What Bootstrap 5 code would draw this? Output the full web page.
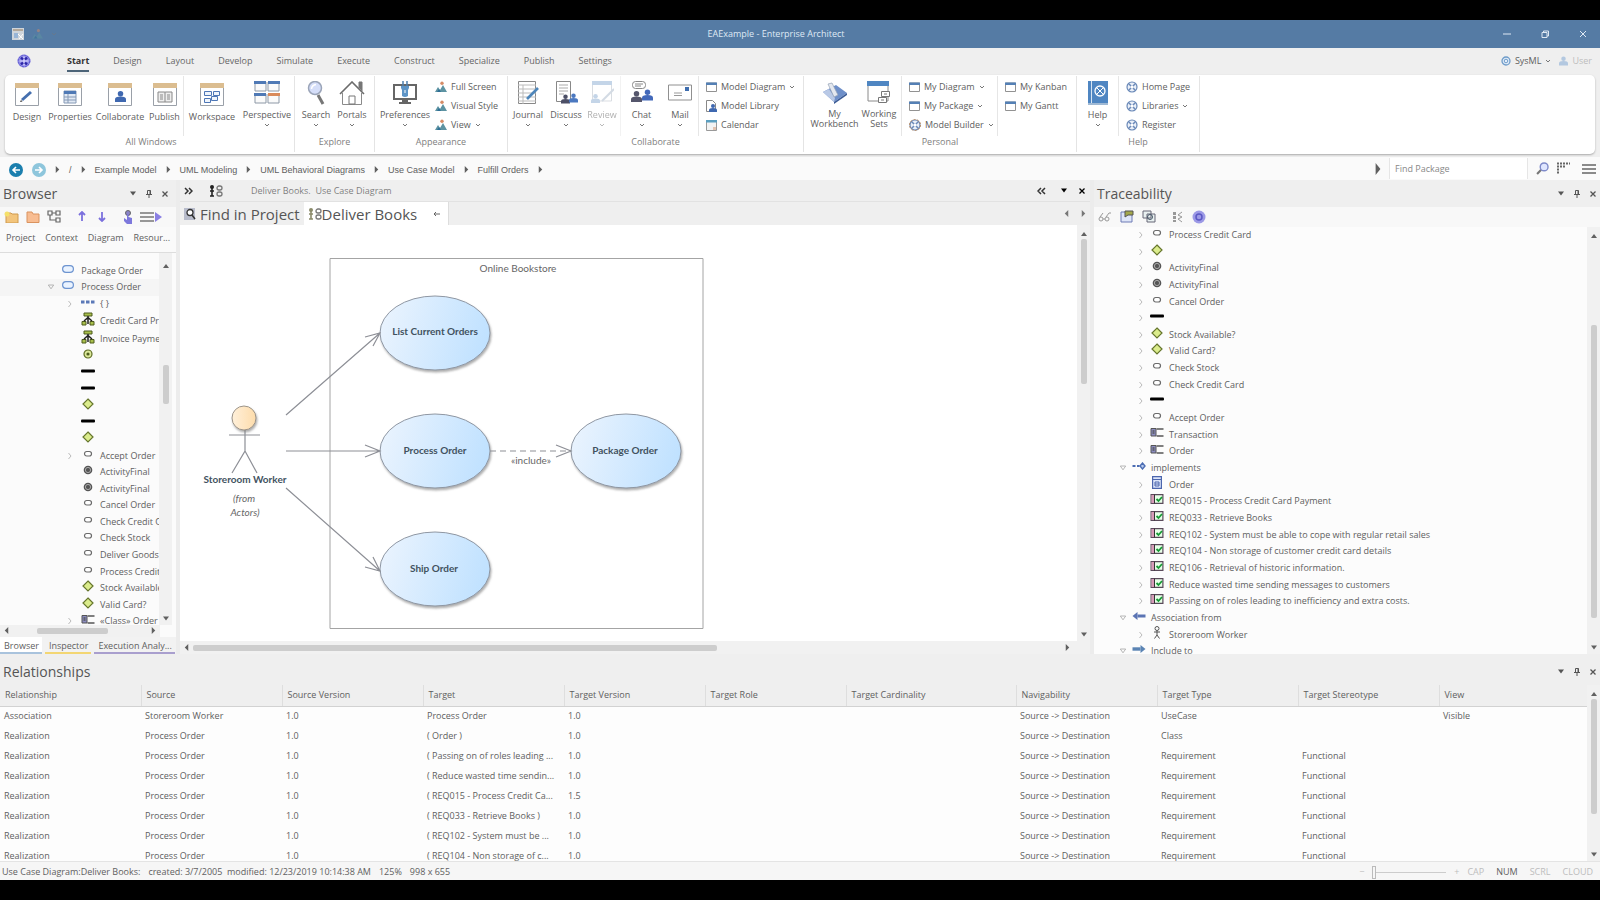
<!DOCTYPE html>
<html lang="en">
<head>
<meta charset="utf-8">
<meta name="viewport" content="width=device-width, initial-scale=1">
<title>EAExample - Enterprise Architect</title>
<link href="https://cdn.jsdelivr.net/npm/bootstrap@5.3.0/dist/css/bootstrap.min.css" rel="stylesheet">
<style>
  body{font-family:"Open Sans","Noto Sans",sans-serif;font-size:9px;line-height:12px;color:#606060;background:#000}
  .shell{height:100vh;padding:20px 0;min-height:700px}
  .shell button,.shell input{font-family:inherit;font-size:inherit;line-height:inherit;color:inherit}
  .plain{background:none;border:0;padding:0;border-radius:0}
  a{color:inherit;text-decoration:none}
  svg{display:block;flex:none}
  .titlebar{height:28px;background:#557ba4;color:#dfe9f4}
  .apptitle{padding-right:56px}
  .win-btns{gap:20px;padding-right:12px}
  .menubar{height:28px;background:#efefef;padding:0 8px 0 13px}
  .menubar .nav{gap:24px;margin-left:32px}
  .menubar .nav-link{padding:7px 0 3px;color:#666;border-bottom:2px solid transparent}
  .menubar .nav-link.active{font-weight:700;color:#333;border-color:#4d6478}
  .ribbon-wrap{background:#efefef;padding:0 5px 3px}
  .ribbon{height:79px;background:#fff;border-radius:5px;box-shadow:0 1px 2px #aaa;padding:1px 0 2px 3px}
  .rgroup{border-right:1px solid #e4e4e4}
  .rgroup footer{height:16px;color:#808080;text-align:center}
  .rcells{display:grid;flex:1}
  .rcells>.cut{border-right:1px solid #e6e6e6}
  .c-win{grid-template-columns:38px 48px 52px 38px 56px 54px}
  .c-exp{grid-template-columns:42px 30px 7px}
  .c-app{grid-template-columns:60px 72px}
  .c-col{grid-template-columns:40px 36px 37px 41px 37px 104px}
  .c-per{grid-template-columns:53px 45px 96px 78px}
  .c-hlp{grid-template-columns:42px 80px}
  .bigbtn{display:flex;flex-direction:column;align-items:center;white-space:nowrap;padding-top:5px!important}
  .bigbtn svg:first-child{margin-bottom:4px}
  .bigbtn svg:last-child{margin-top:2px}
  .bigbtn .two{line-height:10px}
  .smalls{display:flex;flex-direction:column;gap:7px;padding:5px 0 0 7px}
  .smalls button{display:flex;align-items:center;gap:4px;white-space:nowrap;height:12px}
  .pathbar{height:23px;background:#fafafa}
  .pathbar .crumbs{gap:9px;padding-left:9px;padding-top:2px;font-family:"Liberation Sans",Arial,sans-serif}
  .findbox{width:139px;border:0;border-left:1px solid #e6e6e6;border-right:1px solid #e6e6e6;background:#fff;padding:0 5px;height:21px;outline:0}
  .findbox::placeholder{color:#888;opacity:1}
  .work{background:#ececec;min-height:0}
  .side-l{width:176px;background:#fbfbfb}
  .side-r{width:506px;background:#fcfcfc}
  .panel-title{height:27px;background:#efefef;font-size:14px;line-height:27px;color:#555;padding:0 3px}
  .toolrow{height:20px;background:#f8f8f8}
  .toolrow-l{gap:7px}
  .toolrow-l .s1{margin-left:10px}.toolrow-l .s2{margin-left:5px}
  .ptabs{height:26px;padding:5px 6px 0;border-bottom:1px solid #ddd;background:#fafafa}
  .tree{list-style:none;margin:0;padding:0;display:grid;grid-auto-rows:1fr}
  .tree li{display:flex;align-items:center;white-space:nowrap;gap:5px}
  .tree li>svg:nth-child(2){margin-bottom:4px}
  .tree-l{height:367px;margin-top:10px}
  .tree-l .d1{padding-left:45px}
  .tree-l .d2{padding-left:64px}
  .tree-r{height:433px}
  .tree-r .d1{padding-left:25px}
  .tree-r .d2{padding-left:43px}
  .tree-l .picked{background:#f5f5f5}
  .vbar{width:13px;background:#f1f1f1;padding:4px 0}
  .hbar{height:13px;background:#f1f1f1;padding:0 4px}
  .thumb{background:#cdcdcd;border-radius:2px}
  .vbar .thumb{width:6px}.hbar .thumb{height:6px}
  .dock{height:17px;background:#f2f2f2;gap:3px}
  .dock button{border-bottom:2px solid;padding:2px 3px 0 4px;white-space:nowrap}
  .k-blue{border-color:#a9c3dd!important;background:#fff}.k-yel{border-color:#f3d673!important}.k-vio{border-color:#a99fce!important}
  .docline{height:22px;background:#efefef;border-bottom:1px solid #e2e2e2}
  .docline .tools{gap:10px}
  .doctabs{height:23px;background:#efefef;font-size:15px;line-height:22px;color:#555}
  .doctabs .live{background:#fff;border-right:1px solid #ddd}
  .canvas text{fill:#666;font-family:Lato,"Open Sans",sans-serif;font-size:10px;text-anchor:middle}
  .canvas .strong{font-weight:700;fill:#42525f}
  .rel{background:#efefef;padding-top:4px}
  .relrows{height:176px;overflow:hidden;background:#fdfdfd}
  .reltable{table-layout:fixed;width:100%;border-collapse:collapse}
  .reltable th{font-weight:400;height:21px;background:#efefef;padding:0 5px;border-left:1px solid #dedede;border-bottom:1px solid #d2d2d2}
  .reltable th:first-child{border-left:0}
  .reltable td{height:20px;padding:0 4px;white-space:nowrap;overflow:hidden;text-overflow:ellipsis}
  .w-a{width:141px}.w-b{width:170px}
  .status{height:19px;background:#f6f6f6;border-top:1px solid #e4e4e4;padding:2px 7px 0 2px}
  .dim{color:#bdbdbd!important}
  .zoomer{-webkit-appearance:none;appearance:none;width:74px;height:14px;background:linear-gradient(#ccc,#ccc) center/100% 1px no-repeat}
  .zoomer::-webkit-slider-thumb{-webkit-appearance:none;width:4px;height:13px;border:1px solid #bbb;background:#f6f6f6}
</style>
</head>
<body>
<svg width="0" height="0" class="position-absolute" aria-hidden="true">
  <defs>
    <linearGradient id="blue" x1="0" y1=".4" x2="1" y2=".6"><stop offset="0" stop-color="#e9f3fe"/><stop offset="1" stop-color="#bfe1ff"/></linearGradient>
    <linearGradient id="skin" x1="0" x2="1"><stop offset="0" stop-color="#fff0da"/><stop offset="1" stop-color="#fddcab"/></linearGradient>
    <filter id="drop" x="-10%" y="-10%" width="120%" height="130%"><feDropShadow dx="1" dy="2" stdDeviation="1" flood-color="#777" flood-opacity=".6"/></filter>
  </defs>
  <symbol id="chev" viewBox="0 0 6 4"><path d="M1 1l2 2 2-2" fill="none" stroke="#777"/></symbol>
  <symbol id="dn" viewBox="0 0 8 5"><path d="M1 .5h6L4 4.5z" fill="currentColor"/></symbol>
  <symbol id="up" viewBox="0 0 8 5"><path d="M1 4.500h6L4 .5z" fill="currentColor"/></symbol>
  <symbol id="rt" viewBox="0 0 5 8"><path d="M.5 0v8l4-4z" fill="currentColor"/></symbol>
  <symbol id="lf" viewBox="0 0 5 8"><path d="M4.500 0v8l-4-4z" fill="currentColor"/></symbol>
  <symbol id="pin" viewBox="0 0 8 8"><path d="M2.500.5h3v4h-3zM1 4.500h6M4 4.500V8M5 .5v4" fill="none" stroke="currentColor"/></symbol>
  <symbol id="x" viewBox="0 0 8 8"><path d="M1.500 1.500l5 5m0-5l-5 5" stroke="currentColor" stroke-width="1.300"/></symbol>
  <symbol id="win" viewBox="0 0 24 24"><path d="M.5.5h23v22H.5z" fill="#fff" stroke="#9aa0a8"/><path d="M0 0h24v5H0z" fill="#dbbd90"/></symbol>
  <symbol id="ea" viewBox="0 0 14 14"><circle cx="7" cy="7" r="6.500" fill="#8e8ae6"/><circle cx="7" cy="7" r="5.800" fill="none" stroke="#5e58cf" stroke-dasharray="2 1"/><path d="M7 2.500v9M2.500 7h9" stroke="#dcdaff" stroke-width="1.200"/><path d="M4 3.500l2 2M10 3.500l-2 2M4 10.500l2-2M10 10.500l-2-2" stroke="#2c26a8" stroke-width="2.400"/></symbol>
  <symbol id="ball" viewBox="0 0 12 12"><circle cx="6" cy="6" r="5" fill="#e9eff8" stroke="#6a89b8" stroke-width="1.200"/><path d="M3 3l6 6m0-6L3 9" stroke="#6a89b8" stroke-width="1.500"/><circle cx="6" cy="6" r="1.500" fill="#fff"/></symbol>
  <symbol id="scene" viewBox="0 0 12 12"><path d="M0 11l3-5 2 3 3-5 4 7z" fill="#5d93a2"/><path d="M2 11l2-3 2 3z" fill="#2e6f96"/><circle cx="7" cy="2.300" r="1.700" fill="#d58b66"/></symbol>
  <symbol id="mini" viewBox="0 0 11 10"><path d="M.5 1h10v8.500H.5z" fill="#fff" stroke="#929292"/><path d="M0 .5h11V3H0z" fill="#5480b5"/></symbol>
  <symbol id="folk" viewBox="0 0 12 12"><circle cx="6" cy="3" r="3" fill="currentColor"/><path d="M0 12V9q0-3 6-3t6 3v3z" fill="currentColor"/></symbol>
  <symbol id="uc" viewBox="0 0 12 8"><rect x=".6" y=".6" width="10.800" height="6.800" rx="3.400" fill="#eaf3ff" stroke="#6d94d0" stroke-width="1.200"/></symbol>
  <symbol id="act" viewBox="0 0 12 8"><rect x="2.500" y="1.500" width="7" height="4.500" rx="2.200" fill="#fff" stroke="#6b6b6b" stroke-width="1.200"/></symbol>
  <symbol id="fin" viewBox="0 0 12 10"><circle cx="6" cy="5" r="4.300" fill="#555"/><circle cx="6" cy="5" r="2.600" fill="none" stroke="#aaa"/></symbol>
  <symbol id="ini" viewBox="0 0 12 10"><circle cx="6" cy="5" r="4" fill="#dbe89a" stroke="#5c6b22" stroke-width="1.200"/><circle cx="6" cy="5" r="1.600" fill="#4e5c1c"/></symbol>
  <symbol id="dia" viewBox="0 0 12 12"><path d="M6 1l5 5-5 5-5-5z" fill="#dbec8c" stroke="#66762d" stroke-width="1.200"/></symbol>
  <symbol id="bar" viewBox="0 0 14 4"><rect width="14" height="3" y=".5" rx="1" fill="#000"/></symbol>
  <symbol id="dots" viewBox="0 0 14 4"><path d="M0 .5h3.500v3H0zM5 .5h3.500v3H5zM10 .5h3.500v3H10z" fill="#5b79b8"/></symbol>
  <symbol id="org" viewBox="0 0 12 14"><path d="M2 1h8v3H2zM0 9.500h4v3.500H0zM8 9.500h4v3.500H8z" fill="#a9c04c" stroke="#4d5b1c"/><path d="M6 4v8M2 9l4-3.500L10 9" fill="none" stroke="#222" stroke-width="1.500"/></symbol>
  <symbol id="cls" viewBox="0 0 13 9"><path d="M.5.5h5v7.500h-5z" fill="#8b8cc0" stroke="#555"/><path d="M6 1h7M6 8h7M2 3h2M2 5h2" stroke="#555" stroke-width="1.500"/></symbol>
  <symbol id="req" viewBox="0 0 13 10"><path d="M.6.6h11.800v8.800H.6z" fill="#e9ffe9" stroke="#5a4a5a" stroke-width="1.200"/><path d="M1 1h2.500v8H1z" fill="#d79ab8"/><path d="M4 .5v9" stroke="#333"/><path d="M6 5l2 2 3.500-4" fill="none" stroke="#179a35" stroke-width="1.800"/></symbol>
  <symbol id="doc" viewBox="0 0 10 13"><path d="M.6.6h8.800v11.800H.6z" fill="#dce5fa" stroke="#4c66ad" stroke-width="1.200"/><path d="M1 3.500h8M3 6h4v4H3zM3 8h4" fill="none" stroke="#4c66ad"/></symbol>
  <symbol id="imp" viewBox="0 0 13 8"><path d="M0 4h3M4.500 4h2.500" stroke="#4c6db3" stroke-width="2"/><path d="M7.500 4L10 1l2.500 3L10 7z" fill="#b9cbee" stroke="#4c6db3" stroke-width="1.400"/></symbol>
  <symbol id="afrom" viewBox="0 0 13 8"><path d="M13 4H5" stroke="#5b74b4" stroke-width="3"/><path d="M0 4l5-4v8z" fill="#5b74b4"/></symbol>
  <symbol id="ato" viewBox="0 0 13 8"><path d="M0 4h8" stroke="#5b84b4" stroke-width="3.400"/><path d="M13 4L8 0v8z" fill="#5b84b4"/></symbol>
  <symbol id="man" viewBox="0 0 8 13"><circle cx="4" cy="2.500" r="2" fill="none" stroke="#555"/><path d="M4 4.500V9M1 6h6M4 9l-2.500 3.500M4 9l2.500 3.500" fill="none" stroke="#555"/></symbol>
  <symbol id="shut" viewBox="0 0 4 8"><path d="M.5 1L3 4 .5 7" fill="none" stroke="#bbb"/></symbol>
  <symbol id="open" viewBox="0 0 7 6"><path d="M.8 1h5.400L3.500 4.800z" fill="none" stroke="#a5a5a5" stroke-width=".8"/></symbol>
  <symbol id="ucd" viewBox="0 0 14 12"><circle cx="3" cy="2" r="2" fill="currentColor"/><path d="M3 3v8M1 11h4M1 6h4" stroke="currentColor" stroke-width="1.600"/><rect x="8" y="1" width="5" height="4" rx="2" fill="none" stroke="#777" stroke-width="1.300"/><rect x="8" y="7" width="5" height="4" rx="2" fill="none" stroke="#777" stroke-width="1.300"/></symbol>
  <symbol id="lens" viewBox="0 0 12 12"><path d="M1 11l4-4" stroke="#777" stroke-width="2"/><circle cx="7.500" cy="4.500" r="3.600" fill="#dfe6ff" stroke="#7e8ac9" stroke-width="1.300"/></symbol>
</svg>

<div class="shell d-flex flex-column">
  <header class="titlebar d-flex align-items-center">
    <div class="d-flex align-items-center gap-2 ps-2 col">
      <button class="plain ms-1" aria-label="Save"><svg width="12" height="12" viewBox="0 0 12 12"><path d="M0 0h12v12H0z" fill="#cfd5db"/><path d="M1 1h10v2H1z" fill="#b3a89a"/><path d="M2 5h4v5H2z" fill="#98b5d6"/><path d="M6 6l5 5M11 6l-4 5" stroke="#fff"/></svg></button>
      <button class="plain opacity-50" aria-label="Visual style"><svg width="11" height="12"><use href="#scene"/></svg></button>
      <button class="plain" aria-label="More"><svg width="6" height="4" opacity=".5"><use href="#chev"/></svg></button>
    </div>
    <div class="apptitle">EAExample - Enterprise Architect</div>
    <div class="col d-flex justify-content-end">
      <div class="win-btns d-flex justify-content-end">
        <button class="plain mx-1" aria-label="Minimize"><svg width="10" height="10" viewBox="0 0 10 10"><path d="M1 5h8" stroke="#dfe9f4"/></svg></button>
        <button class="plain mx-1" aria-label="Restore"><svg width="10" height="10" viewBox="0 0 10 10"><path d="M2 3.500h5v5H2zM3.500 3.500V2h5v5H7" fill="none" stroke="#dfe9f4"/></svg></button>
        <button class="plain ms-1" aria-label="Close"><svg width="10" height="10" viewBox="0 0 10 10"><path d="M2 2l6 6m0-6L2 8" stroke="#dfe9f4"/></svg></button>
      </div>
    </div>
  </header>

  <div class="menubar d-flex align-items-center">
    <button class="plain d-flex align-items-center ms-1" aria-label="Application menu"><svg width="14" height="14"><use href="#ea"/></svg></button>
    <nav class="nav flex-nowrap align-self-start ps-1">
      <a class="nav-link active" href="#">Start</a><a class="nav-link" href="#">Design</a><a class="nav-link" href="#">Layout</a><a class="nav-link" href="#">Develop</a><a class="nav-link" href="#">Simulate</a><a class="nav-link" href="#">Execute</a><a class="nav-link" href="#">Construct</a><a class="nav-link" href="#">Specialize</a><a class="nav-link" href="#">Publish</a><a class="nav-link" href="#">Settings</a>
    </nav>
    <button class="plain ms-auto d-flex align-items-center gap-1"><svg width="10" height="10" viewBox="0 0 10 10"><circle cx="5" cy="5" r="4" fill="#e4eefa" stroke="#6f9cc9" stroke-width="1.300"/><circle cx="5" cy="5" r="1.800" fill="none" stroke="#6f9cc9"/></svg>SysML <svg width="6" height="4"><use href="#chev"/></svg></button>
    <button class="plain ms-2 d-flex align-items-center gap-1 dim"><svg width="9" height="10" color="#b3c8e0"><use href="#folk"/></svg>User</button>
  </div>

  <div class="ribbon-wrap">
    <div class="ribbon d-flex">
      <section class="rgroup d-flex flex-column">
        <div class="rcells c-win">
          <button class="plain bigbtn"><svg width="24" height="24" viewBox="0 0 24 24"><use href="#win"/><path d="M7 17l9-8" stroke="#456fae" stroke-width="3"/><path d="M5 19l2.500-.5L6 17z" fill="#333"/></svg>Design</button>
          <button class="plain bigbtn"><svg width="24" height="24" viewBox="0 0 24 24"><use href="#win"/><path d="M6 8h12v12H6z" fill="#e1e9f4" stroke="#8599b5"/><path d="M6 8h12v3H6z" fill="#4f79b5"/><path d="M6 14h12M6 17h12M10 11v9" stroke="#8599b5"/></svg>Properties</button>
          <button class="plain bigbtn"><svg width="24" height="24" viewBox="0 0 24 24"><use href="#win"/><svg x="7" y="8" width="11" height="11" color="#3f68b0"><use href="#folk"/></svg></svg>Collaborate</button>
          <button class="plain bigbtn cut"><svg width="24" height="24" viewBox="0 0 24 24"><use href="#win"/><path d="M5 9h6.500q.5.500 1 0H19v10H5zM12 9v10" fill="#eee" stroke="#888"/><path d="M7 12h3M7 14h3M7 16h3M14 12h3M14 14h3M14 16h3" stroke="#888"/></svg>Publish</button>
          <button class="plain bigbtn"><svg width="24" height="24" viewBox="0 0 24 24"><use href="#win"/><path d="M4.500 8.500h7v4h-7zM13.500 8.500h6v4h-6zM4.500 15.500h6v4h-6zM11.500 13.500h6v4h-6z" fill="#eef4fc" stroke="#4d76b6"/></svg>Workspace</button>
          <button class="plain bigbtn"><svg width="26" height="24" viewBox="0 0 26 24"><path d="M1 1h11v9H1zM14 1h11v9H14zM1 13h11v9H1zM14 13h11v9H14z" fill="#fafafa" stroke="#8d98a6"/><path d="M0 0h12v3H0zM14 0h12v3H14zM0 12h12v3H0z" fill="#4f79b5"/><path d="M14 12h12v3H14z" fill="#d98a5a"/></svg>Perspective<svg width="6" height="4"><use href="#chev"/></svg></button>
        </div><footer>All Windows</footer>
      </section>
      <section class="rgroup d-flex flex-column">
        <div class="rcells c-exp">
          <button class="plain bigbtn"><svg width="20" height="24" viewBox="0 0 20 24"><path d="M12 14l5 9" stroke="#777" stroke-width="3"/><circle cx="9" cy="7" r="6.500" fill="#d5def9" stroke="#9aa4b8" stroke-width="1.500"/><path d="M5.500 8Q6 4 10 3.500" fill="none" stroke="#fff" stroke-width="1.500"/></svg>Search<svg width="6" height="4"><use href="#chev"/></svg></button>
          <button class="plain bigbtn"><svg width="26" height="24" viewBox="0 0 26 24"><path d="M3.500 12v11.500h19V12" fill="#fff" stroke="#8a8a8a"/><path d="M1 13L13 1l12 12" fill="none" stroke="#6b6b6b" stroke-width="1.600"/><path d="M20 7V1h3v9" fill="#777" stroke="#777"/><path d="M10 15h6v8h-6z" fill="#fff" stroke="#777"/></svg>Portals<svg width="6" height="4"><use href="#chev"/></svg></button>
        </div><footer>Explore</footer>
      </section>
      <section class="rgroup d-flex flex-column">
        <div class="rcells c-app">
          <button class="plain bigbtn"><svg width="26" height="24" viewBox="0 0 26 24"><path d="M2 4h22v14H2z" fill="#fff" stroke="#666" stroke-width="2"/><path d="M10 18h6v3h3v2H7v-2h3z" fill="#666"/><path d="M11 0v5M15 0v5" stroke="#4e7fae" stroke-width="1.500"/><path d="M9 5h8v2l-1 2v6q-3 2-6 0l0-6-1-2z" fill="#5d94c6"/><path d="M13 9v3" stroke="#fff"/></svg>Preferences<svg width="6" height="4"><use href="#chev"/></svg></button>
          <div class="smalls ps-0">
            <button class="plain"><svg width="12" height="12"><use href="#scene"/></svg>Full Screen</button>
            <button class="plain"><svg width="12" height="12"><use href="#scene"/></svg>Visual Style</button>
            <button class="plain"><svg width="12" height="12"><use href="#scene"/></svg>View <svg width="6" height="4"><use href="#chev"/></svg></button>
          </div>
        </div><footer>Appearance</footer>
      </section>
      <section class="rgroup d-flex flex-column">
        <div class="rcells c-col">
          <button class="plain bigbtn"><svg width="24" height="24" viewBox="0 0 24 24"><path d="M2.500.5h17v22h-17z" fill="#fff" stroke="#888"/><path d="M2 4h18M2 8h18M2 12h18M2 16h18M2 20h18M7 4v19" stroke="#bbb"/><path d="M11 18L22 7" stroke="#4e86ba" stroke-width="2.600"/></svg>Journal<svg width="6" height="4"><use href="#chev"/></svg></button>
          <button class="plain bigbtn"><svg width="24" height="24" viewBox="0 0 24 24"><path d="M2.500.5h14v20h-14z" fill="#fff" stroke="#888"/><path d="M5 4h9M5 7h9M5 10h9M5 13h5" stroke="#aaa"/><svg x="7" y="12" width="9" height="12" color="#4c4f66"><use href="#folk"/></svg><svg x="15" y="11" width="9" height="12" color="#4b78c0"><use href="#folk"/></svg></svg>Discuss<svg width="6" height="4"><use href="#chev"/></svg></button>
          <button class="plain bigbtn cut opacity-50"><svg width="24" height="24" viewBox="0 0 24 24"><path d="M2.500 1h19v19h-19z" fill="#fff" stroke="#b5bcc6"/><path d="M2 0h20v4H2z" fill="#8bacd2"/><path d="M12 20l12-12" stroke="#a9b8ca" stroke-width="2"/><svg x="1" y="12" width="9" height="11" color="#8bacd2"><use href="#folk"/></svg></svg>Review<svg width="6" height="4"><use href="#chev"/></svg></button>
          <button class="plain bigbtn"><svg width="24" height="24" viewBox="0 0 24 24"><rect x="2.500" y=".5" width="13" height="7" rx="3" fill="#fff" stroke="#888"/><path d="M5 3h8M5 5h6" stroke="#888"/><svg x="1" y="8" width="11" height="15" color="#55566c"><use href="#folk"/></svg><svg x="12" y="6" width="11" height="16" color="#4369ba"><use href="#folk"/></svg></svg>Chat<svg width="6" height="4"><use href="#chev"/></svg></button>
          <button class="plain bigbtn cut"><svg width="24" height="24" viewBox="0 0 24 24"><path d="M.5 4h23v15H.5z" fill="#fff" stroke="#909090"/><path d="M17 6h4v4h-4z" fill="#3f6dae"/><path d="M6 12h8M6 14.500h8" stroke="#999"/></svg>Mail<svg width="6" height="4"><use href="#chev"/></svg></button>
          <div class="smalls">
            <button class="plain"><svg width="11" height="10"><use href="#mini"/></svg>Model Diagram <svg width="6" height="4"><use href="#chev"/></svg></button>
            <button class="plain"><svg width="11" height="12" viewBox="0 0 11 12"><path d="M.5.5h6l3 3v8h-9z" fill="#fff" stroke="#888"/><svg x="3" y="4" width="8" height="8" color="#3f68b0"><use href="#folk"/></svg></svg>Model Library</button>
            <button class="plain"><svg width="11" height="11" viewBox="0 0 11 11"><path d="M.5.5h10v10H.5z" fill="#f3f3f3" stroke="#999"/><path d="M0 0h11v2.500H0z" fill="#5b9fc0"/><path d="M7 7h3v3H7z" fill="#e3c3b0"/></svg>Calendar</button>
          </div>
        </div><footer>Collaborate</footer>
      </section>
      <section class="rgroup d-flex flex-column">
        <div class="rcells c-per">
          <button class="plain bigbtn ps-2"><svg width="26" height="24" viewBox="0 0 26 24"><path d="M1 11L14 4l11 8-13 9z" fill="#6e8fc9"/><path d="M1 11l6-3 6 9-1 4z" fill="#b9c9e6"/><path d="M6 3l4-1 6 12-4 2z" fill="#e4e8ef" stroke="#93a0b5" stroke-width=".7"/><path d="M12 21l13-9v2l-13 9z" fill="#3c5c96"/></svg><span class="two">My<br>Workbench</span></button>
          <button class="plain bigbtn cut"><svg width="24" height="24" viewBox="0 0 24 24"><path d="M1 1h20v19H1z" fill="#fff" stroke="#8a8a8a"/><path d="M0 0h22v5H0z" fill="#4f86c2"/><path d="M14.500 10.500h8v5h-8zM11.500 16.500h8v5h-8z" fill="#fff" stroke="#777"/><path d="M17 13h3M14 19h3" stroke="#777"/></svg><span class="two">Working<br>Sets</span></button>
          <div class="smalls cut">
            <button class="plain"><svg width="11" height="10"><use href="#mini"/></svg>My Diagram <svg width="6" height="4"><use href="#chev"/></svg></button>
            <button class="plain"><svg width="11" height="10"><use href="#mini"/></svg>My Package <svg width="6" height="4"><use href="#chev"/></svg></button>
            <button class="plain"><svg width="12" height="12" viewBox="0 0 12 12"><use href="#ball"/><circle cx="6" cy="6" r="5.500" fill="none" stroke="#b98a60" stroke-dasharray="2 1.400"/></svg>Model Builder <svg width="6" height="4"><use href="#chev"/></svg></button>
          </div>
          <div class="smalls">
            <button class="plain"><svg width="11" height="10"><use href="#mini"/></svg>My Kanban</button>
            <button class="plain"><svg width="11" height="10"><use href="#mini"/></svg>My Gantt</button>
          </div>
        </div><footer>Personal</footer>
      </section>
      <section class="rgroup d-flex flex-column">
        <div class="rcells c-hlp">
          <button class="plain bigbtn cut"><svg width="20" height="24" viewBox="0 0 20 24"><path d="M0 0h20v22H0z" fill="#4f86c2"/><path d="M3.500 0v22" stroke="#d7e5f3"/><path d="M0 23h20" stroke="#9fb9d4" stroke-width="2"/><circle cx="12" cy="10" r="5" fill="none" stroke="#fff" stroke-width="1.300"/><path d="M9 7l6 6m0-6l-6 6" stroke="#fff"/></svg>Help<svg width="6" height="4"><use href="#chev"/></svg></button>
          <div class="smalls">
            <button class="plain"><svg width="12" height="12"><use href="#ball"/></svg>Home Page</button>
            <button class="plain"><svg width="12" height="12"><use href="#ball"/></svg>Libraries <svg width="6" height="4"><use href="#chev"/></svg></button>
            <button class="plain"><svg width="12" height="12"><use href="#ball"/></svg>Register</button>
          </div>
        </div><footer>Help</footer>
      </section>
    </div>
  </div>

  <div class="pathbar d-flex align-items-center">
    <nav class="crumbs d-flex align-items-center">
      <button class="plain" aria-label="Back"><svg width="14" height="14" viewBox="0 0 14 14"><circle cx="7" cy="7" r="7" fill="#1b7fae"/><path d="M11 7H4M7 4L4 7l3 3" fill="none" stroke="#fff" stroke-width="1.600"/></svg></button>
      <button class="plain" aria-label="Forward"><svg width="14" height="14" viewBox="0 0 14 14"><circle cx="7" cy="7" r="7" fill="#8ec6dc"/><path d="M3 7h7M7 4l3 3-3 3" fill="none" stroke="#fff" stroke-width="1.600"/></svg></button>
      <svg width="5" height="7"><use href="#rt"/></svg><a href="#">/</a>
      <svg width="5" height="7"><use href="#rt"/></svg><a href="#">Example Model</a>
      <svg width="5" height="7"><use href="#rt"/></svg><a href="#">UML Modeling</a>
      <svg width="5" height="7"><use href="#rt"/></svg><a href="#">UML Behavioral Diagrams</a>
      <svg width="5" height="7"><use href="#rt"/></svg><a href="#">Use Case Model</a>
      <svg width="5" height="7"><use href="#rt"/></svg><a href="#">Fulfill Orders</a>
      <svg width="5" height="7"><use href="#rt"/></svg>
    </nav>
    <div class="ms-auto d-flex align-items-center gap-2 pe-1">
      <svg width="6" height="12" viewBox="0 0 5 8" preserveAspectRatio="none"><use href="#rt"/></svg>
      <input class="findbox" type="text" placeholder="Find Package" aria-label="Find Package">
      <button class="plain" aria-label="Search"><svg width="13" height="13"><use href="#lens"/></svg></button>
      <button class="plain" aria-label="Grid"><svg width="13" height="13" viewBox="0 0 13 13"><path d="M0 1.500h13M0 4.500h8M0 7.500h3M0 10.500h3" stroke="#666" stroke-width="2" stroke-dasharray="2 1"/></svg></button>
      <button class="plain ms-1" aria-label="Menu"><svg width="14" height="12" viewBox="0 0 14 12"><path d="M0 2h14M0 6h14M0 10h14" stroke="#666" stroke-width="1.600"/></svg></button>
    </div>
  </div>

  <main class="work d-flex flex-fill">
    <aside class="side-l d-flex flex-column flex-shrink-0">
      <div class="panel-title d-flex align-items-center">Browser<span class="ms-auto d-flex gap-2 align-items-center pe-1"><svg width="8" height="5"><use href="#dn"/></svg><svg width="8" height="8"><use href="#pin"/></svg><svg width="8" height="8"><use href="#x"/></svg></span></div>
      <div class="toolrow toolrow-l d-flex align-items-center ps-1">
        <button class="plain" aria-label="New model"><svg width="15" height="12" viewBox="0 0 15 12"><path d="M2 2h5l1 1h6v9H2z" fill="#f3c57c" stroke="#cf9a4e"/><circle cx="3" cy="3" r="2.500" fill="#f5e06a"/></svg></button>
        <button class="plain" aria-label="New package"><svg width="14" height="12" viewBox="0 0 14 12"><path d="M1 1h5l1 2h6v8.500H1z" fill="#f8bd92" stroke="#da935f"/></svg></button>
        <button class="plain" aria-label="New diagram"><svg width="14" height="13" viewBox="0 0 14 13"><path d="M1 1h4v4H1zM9 1h4v4H9zM9 8h4v4H9zM3 5v5h6M5 3h4" fill="none" stroke="#666" stroke-width="1.200"/></svg></button>
        <button class="plain s1" aria-label="Move up"><svg width="8" height="11" viewBox="0 0 8 11"><path d="M4 1v9M1 4l3-3 3 3" fill="none" stroke="#7b70dd" stroke-width="1.800"/></svg></button>
        <button class="plain s2" aria-label="Move down"><svg width="8" height="11" viewBox="0 0 8 11"><path d="M4 1v9M1 7l3 3 3-3" fill="none" stroke="#7b70dd" stroke-width="1.800"/></svg></button>
        <button class="plain s1" aria-label="Gesture"><svg width="10" height="14" viewBox="0 0 10 14"><circle cx="5" cy="3" r="2.500" fill="#8a83c8" stroke="#666"/><path d="M4 4v6L1 8v3l3 3h5V8L5.500 7V4z" fill="#7d78dc"/></svg></button>
        <button class="plain" aria-label="Options"><svg width="22" height="12" viewBox="0 0 22 12"><path d="M0 2h14M0 6h14M0 10h14" stroke="#777" stroke-width="1.500"/><path d="M15 1l7 5-7 5z" fill="#8b80e4"/></svg></button>
      </div>
      <nav class="ptabs d-flex justify-content-between"><a href="#">Project</a><a href="#">Context</a><a href="#">Diagram</a><a href="#">Resour...</a></nav>
      <div class="d-flex flex-fill overflow-hidden">
        <div class="flex-fill overflow-hidden h-100">
        <ul class="tree tree-l">
          <li class="d1"><svg width="12" height="6"></svg><svg width="12" height="8"><use href="#uc"/></svg>&nbsp;Package Order</li>
          <li class="d1 picked"><svg width="12" height="6"><use href="#open"/></svg><svg width="12" height="8"><use href="#uc"/></svg>&nbsp;Process Order</li>
          <li class="d2"><svg width="12" height="8"><use href="#shut"/></svg><svg width="14" height="4"><use href="#dots"/></svg>{ }</li>
          <li class="d2"><svg width="12" height="8"></svg><svg width="14" height="14"><use href="#org"/></svg>Credit Card Processing</li>
          <li class="d2"><svg width="12" height="8"></svg><svg width="14" height="14"><use href="#org"/></svg>Invoice Payment</li>
          <li class="d2"><svg width="12" height="8"></svg><svg width="14" height="10"><use href="#ini"/></svg></li>
          <li class="d2"><svg width="12" height="8"></svg><svg width="14" height="4"><use href="#bar"/></svg></li>
          <li class="d2"><svg width="12" height="8"></svg><svg width="14" height="4"><use href="#bar"/></svg></li>
          <li class="d2"><svg width="12" height="8"></svg><svg width="14" height="12"><use href="#dia"/></svg></li>
          <li class="d2"><svg width="12" height="8"></svg><svg width="14" height="4"><use href="#bar"/></svg></li>
          <li class="d2"><svg width="12" height="8"></svg><svg width="14" height="12"><use href="#dia"/></svg></li>
          <li class="d2"><svg width="12" height="8"><use href="#shut"/></svg><svg width="14" height="8"><use href="#act"/></svg>Accept Order</li>
          <li class="d2"><svg width="12" height="8"></svg><svg width="14" height="10"><use href="#fin"/></svg>ActivityFinal</li>
          <li class="d2"><svg width="12" height="8"></svg><svg width="14" height="10"><use href="#fin"/></svg>ActivityFinal</li>
          <li class="d2"><svg width="12" height="8"></svg><svg width="14" height="8"><use href="#act"/></svg>Cancel Order</li>
          <li class="d2"><svg width="12" height="8"></svg><svg width="14" height="8"><use href="#act"/></svg>Check Credit Card</li>
          <li class="d2"><svg width="12" height="8"></svg><svg width="14" height="8"><use href="#act"/></svg>Check Stock</li>
          <li class="d2"><svg width="12" height="8"></svg><svg width="14" height="8"><use href="#act"/></svg>Deliver Goods</li>
          <li class="d2"><svg width="12" height="8"></svg><svg width="14" height="8"><use href="#act"/></svg>Process Credit Card</li>
          <li class="d2"><svg width="12" height="8"></svg><svg width="14" height="12"><use href="#dia"/></svg>Stock Available?</li>
          <li class="d2"><svg width="12" height="8"></svg><svg width="14" height="12"><use href="#dia"/></svg>Valid Card?</li>
          <li class="d2"><svg width="12" height="8"><use href="#shut"/></svg><svg width="14" height="9"><use href="#cls"/></svg>«Class» Order</li>
        </ul>
        </div>
        <div class="vbar d-flex flex-column align-items-center flex-shrink-0 pt-2 me-1"><svg width="8" height="10"><use href="#up"/></svg><div class="flex-fill d-flex flex-column"><div style="flex:92"></div><div class="thumb" style="flex:38"></div><div style="flex:207"></div></div><svg width="8" height="5"><use href="#dn"/></svg></div>
      </div>
      <div class="hbar d-flex align-items-center me-3"><svg width="5" height="7"><use href="#lf"/></svg><div class="flex-fill d-flex"><div style="flex:28"></div><div class="thumb" style="flex:71"></div><div style="flex:43"></div></div><svg width="5" height="7"><use href="#rt"/></svg></div>
      <div class="dock d-flex"><button class="plain k-blue">Browser</button><button class="plain k-yel">Inspector</button><button class="plain k-vio">Execution Analy...</button></div>
    </aside>

    <section class="flex-fill d-flex flex-column ms-1 overflow-hidden">
      <div class="docline d-flex align-items-center ps-1 pe-1">
        <svg width="9" height="8" viewBox="0 0 9 8"><path d="M1 1l3 3-3 3M5 1l3 3-3 3" fill="none" stroke="#333" stroke-width="1.500"/></svg>
        <svg class="ms-3" width="14" height="12" color="#222"><use href="#ucd"/></svg>
        <span class="ms-4 ps-1 text-black-50">Deliver Books.&nbsp; Use Case Diagram</span>
        <span class="tools ms-auto d-flex align-items-center text-black"><svg class="me-1" width="9" height="8" viewBox="0 0 9 8"><path d="M4 1L1 4l3 3M8 1L5 4l3 3" fill="none" stroke="#333" stroke-width="1.500"/></svg><svg width="8" height="5"><use href="#dn"/></svg><svg width="8" height="8"><use href="#x"/></svg></span>
      </div>
      <div class="doctabs d-flex">
        <button class="plain d-flex align-items-center ps-1 pe-1"><svg class="me-1" width="12" height="12" viewBox="0 0 12 12"><path d="M0 0h11v12H0z" fill="#b8bccb"/><circle cx="6" cy="4.500" r="3" fill="#fff" stroke="#333" stroke-width="1.300"/><path d="M8 7l3 4" stroke="#333" stroke-width="1.600"/></svg>Find in Project</button>
        <button class="plain live d-flex align-items-center ps-1 pe-2"><svg width="14" height="12" color="#8b8b6a"><use href="#ucd"/></svg>Deliver Books<svg class="ms-3" width="7" height="6" viewBox="0 0 7 6"><path d="M7 3H1M3 1L1 3l2 2" fill="none" stroke="#666"/></svg></button>
        <span class="ms-auto d-flex align-items-center gap-2 pe-1 text-black-50"><svg width="5" height="7"><use href="#lf"/></svg><svg class="ms-1" width="5" height="7"><use href="#rt"/></svg></span>
      </div>
      <div class="flex-fill d-flex overflow-hidden">
        <div class="canvas flex-fill bg-white overflow-hidden">
          <svg width="560" height="415" viewBox="180 225 560 415" role="img" aria-label="Deliver Books use case diagram">
            <path d="M330 258.500h373v370H330z" fill="none" stroke="#a4a4a4"/>
            <text x="518" y="272" >Online Bookstore</text>
            <g fill="url(#blue)" stroke="#8f97a3" filter="url(#drop)"><ellipse cx="435" cy="333" rx="55" ry="37"/><ellipse cx="435" cy="451" rx="55" ry="37"/><ellipse cx="435" cy="569" rx="55" ry="37"/><ellipse cx="626" cy="451" rx="55" ry="37"/></g>
            <g fill="none" stroke="#8d8f96" stroke-width="1.200"><path d="M286 415l94-82M365 337l15-4-7 13M286 451h94M365 445l15 6-15 6M286 488l94 83M365 567l15 4-7-14M556 445l15 6-15 6"/><path d="M490 451h81" stroke-dasharray="6 4"/><path d="M245 430v21l-13 22M245 451l12 22M229 435h31"/></g>
            <circle cx="244" cy="418" r="12" fill="url(#skin)" stroke="#9c948a" filter="url(#drop)"/>
            <text class="strong" x="435" y="335">List Current Orders</text><text class="strong" x="435" y="454">Process Order</text><text class="strong" x="434" y="572">Ship Order</text><text class="strong" x="625" y="454">Package Order</text><text class="strong" x="245" y="483">Storeroom Worker</text>
            <text x="531" y="464">«include»</text>
            <text x="244" y="502" font-style="italic">(from</text><text x="245" y="516" font-style="italic">Actors)</text>
          </svg>
        </div>
        <div class="vbar d-flex flex-column align-items-center"><svg width="8" height="10"><use href="#up"/></svg><div class="flex-fill d-flex flex-column"><div class="thumb" style="flex:143"></div><div style="flex:246"></div></div><svg width="8" height="5"><use href="#dn"/></svg></div>
      </div>
      <div class="hbar d-flex align-items-center gap-1 pe-3"><svg width="5" height="7"><use href="#lf"/></svg><div class="flex-fill d-flex"><div class="thumb" style="flex:525"></div><div style="flex:344"></div></div><svg class="me-1" width="5" height="7"><use href="#rt"/></svg></div>
    </section>

    <aside class="side-r d-flex flex-column flex-shrink-0 ms-1">
      <div class="panel-title d-flex align-items-center">Traceability<span class="ms-auto d-flex gap-2 align-items-center"><svg width="8" height="5"><use href="#dn"/></svg><svg width="8" height="8"><use href="#pin"/></svg><svg width="8" height="8"><use href="#x"/></svg></span></div>
      <div class="toolrow d-flex align-items-center gap-2 ps-1">
        <button class="plain" aria-label="View"><svg width="14" height="10" viewBox="0 0 14 10"><circle cx="3" cy="7" r="2" fill="none" stroke="#999"/><circle cx="9" cy="7" r="2" fill="none" stroke="#999"/><path d="M2 5l3-4M8 5l3-4h2M5 7h2" fill="none" stroke="#999"/></svg></button>
        <button class="plain" aria-label="Properties"><svg width="14" height="13" viewBox="0 0 14 13"><path d="M1 2h11v10H1z" fill="#dfe6f8" stroke="#6c7bb5"/><path d="M5 1h8v4H8L5 7z" fill="#a3a84b" stroke="#555"/></svg></button>
        <button class="plain" aria-label="Diagram"><svg width="14" height="13" viewBox="0 0 14 13"><path d="M1 1h8v7H1zM5 4h8v8H5z" fill="#e8f0f0" stroke="#667"/><circle cx="8" cy="7" r="2.500" fill="none" stroke="#456"/></svg></button>
        <button class="plain ms-2" aria-label="Links"><svg width="12" height="12" viewBox="0 0 12 12"><path d="M1 1h3v3H1zM1 5h3v3H1zM1 9h3v2H1z" fill="#999"/><path d="M10 1L6 4l4 2-4 2 4 3" fill="none" stroke="#999"/></svg></button>
        <button class="plain" aria-label="Help"><svg width="14" height="14" viewBox="0 0 14 14"><circle cx="7" cy="7" r="6.500" fill="#9c99e6"/><circle cx="7" cy="7" r="3" fill="none" stroke="#5c58c4" stroke-width="1.500"/></svg></button>
      </div>
      <div class="d-flex flex-fill overflow-hidden">
        <div class="flex-fill overflow-hidden">
        <ul class="tree tree-r">
          <li class="d2"><svg width="8" height="8"><use href="#shut"/></svg><svg width="14" height="8"><use href="#act"/></svg>Process Credit Card</li>
          <li class="d2"><svg width="8" height="8"><use href="#shut"/></svg><svg width="14" height="12"><use href="#dia"/></svg></li>
          <li class="d2"><svg width="8" height="8"><use href="#shut"/></svg><svg width="14" height="10"><use href="#fin"/></svg>ActivityFinal</li>
          <li class="d2"><svg width="8" height="8"><use href="#shut"/></svg><svg width="14" height="10"><use href="#fin"/></svg>ActivityFinal</li>
          <li class="d2"><svg width="8" height="8"><use href="#shut"/></svg><svg width="14" height="8"><use href="#act"/></svg>Cancel Order</li>
          <li class="d2"><svg width="8" height="8"><use href="#shut"/></svg><svg width="14" height="4"><use href="#bar"/></svg></li>
          <li class="d2"><svg width="8" height="8"><use href="#shut"/></svg><svg width="14" height="12"><use href="#dia"/></svg>Stock Available?</li>
          <li class="d2"><svg width="8" height="8"><use href="#shut"/></svg><svg width="14" height="12"><use href="#dia"/></svg>Valid Card?</li>
          <li class="d2"><svg width="8" height="8"><use href="#shut"/></svg><svg width="14" height="8"><use href="#act"/></svg>Check Stock</li>
          <li class="d2"><svg width="8" height="8"><use href="#shut"/></svg><svg width="14" height="8"><use href="#act"/></svg>Check Credit Card</li>
          <li class="d2"><svg width="8" height="8"><use href="#shut"/></svg><svg width="14" height="4"><use href="#bar"/></svg></li>
          <li class="d2"><svg width="8" height="8"><use href="#shut"/></svg><svg width="14" height="8"><use href="#act"/></svg>Accept Order</li>
          <li class="d2"><svg width="8" height="8"><use href="#shut"/></svg><svg width="14" height="9"><use href="#cls"/></svg>Transaction</li>
          <li class="d2"><svg width="8" height="8"><use href="#shut"/></svg><svg width="14" height="9"><use href="#cls"/></svg>Order</li>
          <li class="d1"><svg width="8" height="6"><use href="#open"/></svg><svg width="14" height="8"><use href="#imp"/></svg>implements</li>
          <li class="d2"><svg width="8" height="8"><use href="#shut"/></svg><svg width="14" height="13"><use href="#doc"/></svg>Order</li>
          <li class="d2"><svg width="8" height="8"><use href="#shut"/></svg><svg width="14" height="10"><use href="#req"/></svg>REQ015 - Process Credit Card Payment</li>
          <li class="d2"><svg width="8" height="8"><use href="#shut"/></svg><svg width="14" height="10"><use href="#req"/></svg>REQ033 - Retrieve Books</li>
          <li class="d2"><svg width="8" height="8"><use href="#shut"/></svg><svg width="14" height="10"><use href="#req"/></svg>REQ102 - System must be able to cope with regular retail sales</li>
          <li class="d2"><svg width="8" height="8"><use href="#shut"/></svg><svg width="14" height="10"><use href="#req"/></svg>REQ104 - Non storage of customer credit card details</li>
          <li class="d2"><svg width="8" height="8"><use href="#shut"/></svg><svg width="14" height="10"><use href="#req"/></svg>REQ106 - Retrieval of historic information.</li>
          <li class="d2"><svg width="8" height="8"><use href="#shut"/></svg><svg width="14" height="10"><use href="#req"/></svg>Reduce wasted time sending messages to customers</li>
          <li class="d2"><svg width="8" height="8"><use href="#shut"/></svg><svg width="14" height="10"><use href="#req"/></svg>Passing on of roles leading to inefficiency and extra costs.</li>
          <li class="d1"><svg width="8" height="6"><use href="#open"/></svg><svg width="14" height="8"><use href="#afrom"/></svg>Association from</li>
          <li class="d2"><svg width="8" height="8"><use href="#shut"/></svg><svg width="14" height="13"><use href="#man"/></svg>Storeroom Worker</li>
          <li class="d1"><svg width="8" height="6"><use href="#open"/></svg><svg width="14" height="8"><use href="#ato"/></svg>Include to</li>
        </ul>
        </div>
        <div class="vbar d-flex flex-column align-items-center flex-shrink-0"><svg width="8" height="10"><use href="#up"/></svg><div class="flex-fill d-flex flex-column"><div style="flex:84"></div><div class="thumb" style="flex:294"></div><div style="flex:27"></div></div><svg width="8" height="5"><use href="#dn"/></svg></div>
      </div>
    </aside>
  </main>

  <section class="rel">
    <div class="panel-title d-flex align-items-center">Relationships<span class="ms-auto d-flex gap-2 align-items-center"><svg width="8" height="5"><use href="#dn"/></svg><svg width="8" height="8"><use href="#pin"/></svg><svg width="8" height="8"><use href="#x"/></svg></span></div>
    <div class="relrows d-flex">
      <div class="flex-fill">
      <table class="reltable">
        <colgroup><col class="w-a"><col class="w-a"><col class="w-a"><col class="w-a"><col class="w-a"><col class="w-a"><col class="w-b"><col class="w-a"><col class="w-a"><col class="w-a"><col></colgroup>
        <thead><tr><th>Relationship</th><th>Source</th><th>Source Version</th><th>Target</th><th>Target Version</th><th>Target Role</th><th>Target Cardinality</th><th>Navigability</th><th>Target Type</th><th>Target Stereotype</th><th>View</th></tr></thead>
        <tbody>
          <tr><td>Association</td><td>Storeroom Worker</td><td>1.0</td><td>Process Order</td><td>1.0</td><td></td><td></td><td>Source -&gt; Destination</td><td>UseCase</td><td></td><td>Visible</td></tr>
          <tr><td>Realization</td><td>Process Order</td><td>1.0</td><td>( Order )</td><td>1.0</td><td></td><td></td><td>Source -&gt; Destination</td><td>Class</td><td></td><td></td></tr>
          <tr><td>Realization</td><td>Process Order</td><td>1.0</td><td>( Passing on of roles leading ...</td><td>1.0</td><td></td><td></td><td>Source -&gt; Destination</td><td>Requirement</td><td>Functional</td><td></td></tr>
          <tr><td>Realization</td><td>Process Order</td><td>1.0</td><td>( Reduce wasted time sendin...</td><td>1.0</td><td></td><td></td><td>Source -&gt; Destination</td><td>Requirement</td><td>Functional</td><td></td></tr>
          <tr><td>Realization</td><td>Process Order</td><td>1.0</td><td>( REQ015 - Process Credit Ca...</td><td>1.5</td><td></td><td></td><td>Source -&gt; Destination</td><td>Requirement</td><td>Functional</td><td></td></tr>
          <tr><td>Realization</td><td>Process Order</td><td>1.0</td><td>( REQ033 - Retrieve Books )</td><td>1.0</td><td></td><td></td><td>Source -&gt; Destination</td><td>Requirement</td><td>Functional</td><td></td></tr>
          <tr><td>Realization</td><td>Process Order</td><td>1.0</td><td>( REQ102 - System must be ...</td><td>1.0</td><td></td><td></td><td>Source -&gt; Destination</td><td>Requirement</td><td>Functional</td><td></td></tr>
          <tr><td>Realization</td><td>Process Order</td><td>1.0</td><td>( REQ104 - Non storage of c...</td><td>1.0</td><td></td><td></td><td>Source -&gt; Destination</td><td>Requirement</td><td>Functional</td><td></td></tr>
        </tbody>
      </table>
      </div>
      <div class="vbar d-flex flex-column align-items-center flex-shrink-0"><svg width="8" height="10"><use href="#up"/></svg><div class="flex-fill d-flex flex-column"><div class="thumb" style="flex:113"></div><div style="flex:37"></div></div><svg width="8" height="5"><use href="#dn"/></svg></div>
    </div>
  </section>
  <footer class="status d-flex align-items-center gap-2">
    <span>Use Case Diagram:Deliver Books:</span><span>created: 3/7/2005&nbsp; modified: 12/23/2019 10:14:38 AM</span><span>125%</span><span>998 x 655</span>
    <span class="ms-auto dim">−</span><input class="zoomer" type="range" min="0" max="100" value="0" aria-label="Zoom"><span class="dim">+</span><span class="dim">CAP</span><span class="ps-1">NUM</span><span class="ps-1 dim">SCRL</span><span class="ps-1 dim">CLOUD</span>
  </footer>
</div>
<script src="https://cdn.jsdelivr.net/npm/bootstrap@5.3.0/dist/js/bootstrap.bundle.min.js"></script>
</body>
</html>
